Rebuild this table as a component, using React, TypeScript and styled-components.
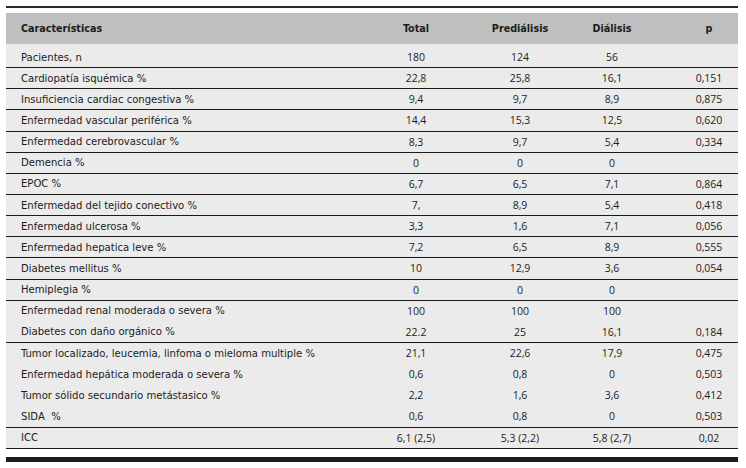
import styled, { createGlobalStyle, css } from "styled-components";

const GlobalStyle = createGlobalStyle`
    html,
    body {
        margin: 0;
        padding: 0;
        background: #ffffff;
    }
`;

// Shared column layout for the header row and body rows
const columns = css`
    display: grid;
    grid-template-columns: 362px 96px 112px 72px 90px;
    align-items: center;

    & > :nth-child(5) {
        padding-left: 32px;
    }
`;

const Page = styled.div`
    width: 746px;
    height: 468px;
    padding: 6px 8px 0 6px;
    box-sizing: border-box;
    display: flex;
    flex-direction: column;
`;

const TopRule = styled.div`
    height: 2px;
    background: #2a2a2a;
    margin-bottom: 5px;
`;

const HeaderRow = styled.div`
    ${columns};
    height: 31px;
    background: #bfbfbf;
    color: #1c1c1c;
    font-family: "DejaVu Sans Condensed", "DejaVu Sans", sans-serif;
    font-stretch: condensed;
    font-weight: 700;
    font-size: 10.7px;
`;

const HeadCell = styled.div<{ $left?: boolean }>`
    text-align: ${(p) => (p.$left ? "left" : "center")};
    padding-left: ${(p) => (p.$left ? "15px" : "0")};
`;

const Body = styled.div`
    background: #ebebeb;
    padding-top: 3px;
`;

const Row = styled.div<{ $line: boolean }>`
    ${columns};
    height: 21.15px;
    box-sizing: border-box;
    border-bottom: 1px solid ${(p) => (p.$line ? "#1a1a1a" : "transparent")};
    color: #1c1c1c;
`;

const Label = styled.div`
    padding-left: 15px;
    font-family: "DejaVu Sans Condensed", "DejaVu Sans", sans-serif;
    font-stretch: condensed;
    font-size: 11.2px;
    white-space: pre;
`;

const Value = styled.div`
    text-align: center;
    font-family: "Open Sans", "Liberation Sans", sans-serif;
    font-size: 10.5px;
`;

const BottomBar = styled.div`
    height: 5px;
    background: #1e1e1e;
    margin-top: 8px;
`;

interface DataRow {
    label: string;
    values: [string, string, string, string];
    line: boolean;
}

const rows: DataRow[] = [
    { label: "Pacientes, n", values: ["180", "124", "56", ""], line: true },
    { label: "Cardiopatía isquémica %", values: ["22,8", "25,8", "16,1", "0,151"], line: true },
    { label: "Insuficiencia cardiac congestiva %", values: ["9,4", "9,7", "8,9", "0,875"], line: true },
    { label: "Enfermedad vascular periférica %", values: ["14,4", "15,3", "12,5", "0,620"], line: true },
    { label: "Enfermedad cerebrovascular %", values: ["8,3", "9,7", "5,4", "0,334"], line: true },
    { label: "Demencia %", values: ["0", "0", "0", ""], line: true },
    { label: "EPOC %", values: ["6,7", "6,5", "7,1", "0,864"], line: true },
    { label: "Enfermedad del tejido conectivo %", values: ["7,", "8,9", "5,4", "0,418"], line: true },
    { label: "Enfermedad ulcerosa %", values: ["3,3", "1,6", "7,1", "0,056"], line: true },
    { label: "Enfermedad hepatica leve %", values: ["7,2", "6,5", "8,9", "0,555"], line: true },
    { label: "Diabetes mellitus %", values: ["10", "12,9", "3,6", "0,054"], line: true },
    { label: "Hemiplegia %", values: ["0", "0", "0", ""], line: true },
    { label: "Enfermedad renal moderada o severa %", values: ["100", "100", "100", ""], line: false },
    { label: "Diabetes con daño orgánico %", values: ["22.2", "25", "16,1", "0,184"], line: true },
    { label: "Tumor localizado, leucemia, linfoma o mieloma multiple %", values: ["21,1", "22,6", "17,9", "0,475"], line: false },
    { label: "Enfermedad hepática moderada o severa %", values: ["0,6", "0,8", "0", "0,503"], line: false },
    { label: "Tumor sólido secundario metástasico %", values: ["2,2", "1,6", "3,6", "0,412"], line: false },
    { label: "SIDA  %", values: ["0,6", "0,8", "0", "0,503"], line: true },
    { label: "ICC", values: ["6,1 (2,5)", "5,3 (2,2)", "5,8 (2,7)", "0,02"], line: true },
];

export default function App() {
    return (
        <>
            <GlobalStyle />
            <Page>
                <TopRule />
                <HeaderRow>
                    <HeadCell $left>Características</HeadCell>
                    <HeadCell>Total</HeadCell>
                    <HeadCell>Prediálisis</HeadCell>
                    <HeadCell>Diálisis</HeadCell>
                    <HeadCell>p</HeadCell>
                </HeaderRow>
                <Body>
                    {rows.map((r) => (
                        <Row key={r.label} $line={r.line}>
                            <Label>{r.label}</Label>
                            {r.values.map((v, i) => (
                                <Value key={i}>{v}</Value>
                            ))}
                        </Row>
                    ))}
                </Body>
                <BottomBar />
            </Page>
        </>
    );
}
